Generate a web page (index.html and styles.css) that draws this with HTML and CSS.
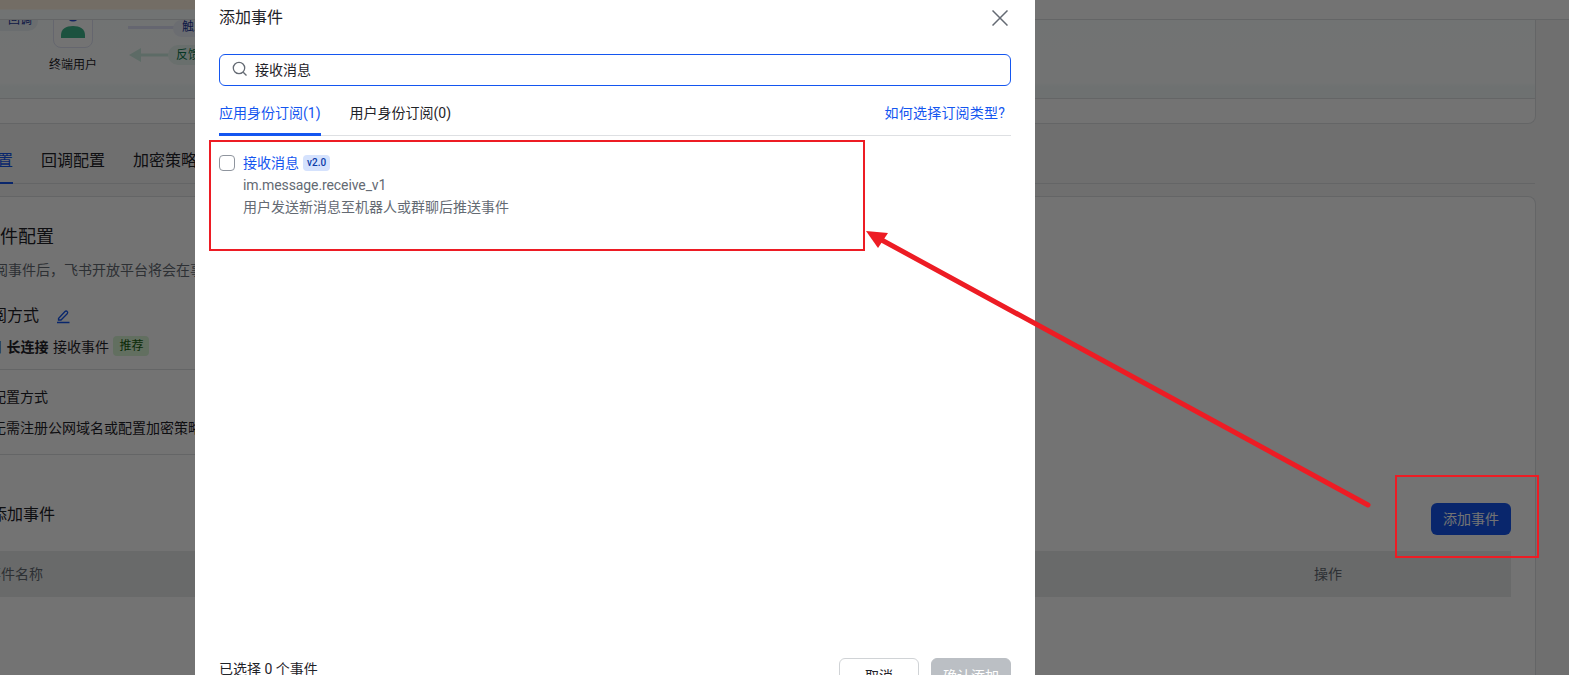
FILE: index.html
```html
<!DOCTYPE html>
<html>

<head>
    <link rel="stylesheet" href="styles.css">
    <title>添加事件</title>
</head>

<body>
    <div class="page">
        <div class="topbar"></div>

        <div class="card intro">
            <div class="hero">
                <div class="chip chip-callback">回调</div>
                <div class="user-box">
                    <svg width="38" height="40" viewBox="0 0 38 40">
                        <circle cx="19" cy="7" r="6.5" fill="#2f4fd0" />
                        <path d="M7 27c0-6 5-9 12-9s12 3 12 9v3H7z" fill="#3fb58c" />
                        <path d="M29 2c0 2-.5 3.500-1.500 5M33 1c0 2.500-.5 4.500-1.500 6" fill="none" stroke="#3fb58c" stroke-width="1.400" />
                    </svg>
                </div>
                <div class="user-name">终端用户</div>
                <div class="flow-line"></div>
                <div class="chip chip-trigger">触发</div>
                <svg class="back-arrow" width="40" height="16" viewBox="0 0 40 16">
                    <path d="M0 8L12 1v5.500h28v3H12V15z" fill="#cfeee2" />
                </svg>
                <div class="chip chip-back">反馈</div>
            </div>
        </div>

        <div class="tabs-bar">
            <span class="page-tab page-tab-active">事件配置</span>
            <span class="page-tab">回调配置</span>
            <span class="page-tab">加密策略</span>
        </div>

        <div class="card config">
            <h2 class="config-title">事件配置</h2>
            <p class="config-desc">订阅事件后，飞书开放平台将会在事件发生时推送事件</p>
            <div class="mode-title">订阅方式
                <svg class="edit-icon" width="16" height="16" viewBox="0 0 16 16">
                    <path d="M3.500 10.500L10 3.500a1.500 1.500 0 0 1 2.200 0a1.500 1.500 0 0 1 0 2.200L6 12H3.500zM2 14.500h12.500" fill="none" stroke="#1456f0" stroke-width="1.300" />
                </svg>
            </div>
            <div class="mode-row">使用&nbsp;<b>长连接</b>&nbsp;接收事件&nbsp;<span class="tag">推荐</span></div>
            <div class="divider divider-first"></div>
            <div class="sub-title">配置方式</div>
            <div class="sub-text">无需注册公网域名或配置加密策略</div>
            <div class="divider divider-second"></div>
            <div class="events-head">
                <span class="events-title">添加事件</span>
                <span class="btn-add">添加事件</span>
            </div>
            <div class="table-head">
                <span class="col-name">事件名称</span>
                <span class="col-action">操作</span>
            </div>
        </div>
    </div>

    <div class="mask"></div>

    <div class="modal">
        <div class="modal-head">
            <span>添加事件</span>
            <svg width="16" height="16" viewBox="0 0 16 16">
                <path d="M.5.500l15 15M15.500.500l-15 15" fill="none" stroke="#646a73" stroke-width="1.500" />
            </svg>
        </div>

        <div class="search">
            <svg width="16" height="16" viewBox="0 0 16 16">
                <circle cx="7" cy="7" r="5.700" fill="none" stroke="#646a73" stroke-width="1.300" />
                <path d="M11.200 11.200l3.300 3.300" fill="none" stroke="#646a73" stroke-width="1.300" />
            </svg>
            <span>接收消息</span>
        </div>

        <div class="modal-tabs">
            <span class="modal-tab modal-tab-active">应用身份订阅(1)</span>
            <span class="modal-tab">用户身份订阅(0)</span>
            <span class="help-link">如何选择订阅类型?</span>
        </div>

        <div class="event-item">
            <span class="checkbox"></span>
            <div>
                <div class="event-line"><span class="event-name">接收消息</span><span class="version">v2.0</span></div>
                <div class="event-key event-id">im.message.receive_v1</div>
                <div class="event-key">用户发送新消息至机器人或群聊后推送事件</div>
            </div>
        </div>

        <div class="modal-foot">
            <span class="selected">已选择 0 个事件</span>
            <div class="foot-btns">
                <span class="btn btn-cancel">取消</span>
                <span class="btn btn-confirm">确认添加</span>
            </div>
        </div>
    </div>

    <div class="mark mark-list"></div>
    <div class="mark mark-button"></div>
    <svg class="mark-arrow" width="1569" height="675" viewBox="0 0 1569 675">
        <path d="M1368 505L878 238" fill="none" stroke="#ed1c24" stroke-width="5" stroke-linecap="round" />
        <path d="M866 231L888 233L878 248z" fill="#ed1c24" />
    </svg>
</body>

</html>
```

FILE: styles.css
```css
html, body {
    margin: 0;
    height: 100%;
    overflow: hidden;
}

body {
    position: relative;
    background: #f5f6f7;
    color: #1f2329;
    font-family: Roboto, "Noto Sans CJK SC", sans-serif;
    font-size: 14px;
}

.page {
    margin-left: -40px;
    width: 1576px;
}

.topbar {
    width: 1609px;
    height: 19px;
    border-bottom: 1px solid #dee0e3;
    background: linear-gradient(#fff2e0 0, #fff2e0 9px, #fbfeff 10px) no-repeat;
    background-size: 30% 100%;
    background-color: #fff;
}

.card {
    box-sizing: border-box;
    background: #fff;
    border: 1px solid #dee0e3;
    border-radius: 8px;
}

.intro {
    height: 104px;
    border-top: none;
    border-radius: 0 0 8px 8px;
}

.hero {
    position: relative;
    height: 78px;
    border-bottom: 1px solid #dee0e3;
    background: linear-gradient(#fbffff, #fdffff 80%, #f3fafa 86%);
    overflow: hidden;
}

.chip {
    position: absolute;
    border-radius: 10px;
    font-size: 12px;
    line-height: 20px;
}

.chip-callback {
    left: 30px;
    top: -10px;
    width: 47px;
    height: 21px;
    padding-left: 17px;
    box-sizing: border-box;
    background: #ecf1f6;
    color: #1f3a9a;
}

.user-box {
    position: absolute;
    left: 92px;
    top: -14px;
    width: 38px;
    height: 39px;
    border: 1px solid #dfe3f4;
    border-radius: 8px;
    background: #fff;
    padding-top: 1px;
}

.user-name {
    position: absolute;
    left: 88px;
    top: 36px;
    font-size: 12px;
    line-height: 18px;
}

.flow-line {
    position: absolute;
    left: 167px;
    top: 6px;
    width: 50px;
    height: 3px;
    background: #dfe3f8;
}

.chip-trigger {
    left: 212px;
    top: 0;
    width: 60px;
    height: 17px;
    padding-left: 9px;
    box-sizing: border-box;
    line-height: 14px;
    background: #eef1fa;
    color: #1f3a9a;
}

.back-arrow {
    position: absolute;
    left: 168px;
    top: 27px;
}

.chip-back {
    left: 207px;
    top: 25px;
    width: 60px;
    height: 20px;
    padding-left: 8px;
    box-sizing: border-box;
    background: #e9f7f1;
    color: #0f7a52;
}

.tabs-bar {
    display: flex;
    gap: 28px;
    height: 60px;
    box-sizing: border-box;
    border-bottom: 1px solid #dee0e3;
    padding-top: 25px;
    width: 1575px;
}

.page-tab {
    font-size: 16px;
    line-height: 24px;
    height: 35px;
    box-sizing: border-box;
    flex-shrink: 0;
}

.page-tab-active {
    margin-left: -11px;
    color: #1456f0;
    border-bottom: 2px solid #1456f0;
}

.config {
    margin-top: 12px;
    height: 600px;
    border-bottom: none;
    padding: 0 24px 0 0;
    border-radius: 8px 8px 0 0;
}

.config-title {
    margin: 27px 0 0 21px;
    font-size: 18px;
    font-weight: 400;
    line-height: 26px;
}

.config-desc {
    margin: 9px 0 0 19px;
    font-size: 14px;
    line-height: 22px;
    color: #646a73;
}

.mode-title {
    margin: 23px 0 0 14px;
    font-size: 16px;
    line-height: 24px;
    display: flex;
    align-items: center;
}

.edit-icon {
    margin-left: 16px;
    margin-top: -1px;
}

.mode-row {
    margin: 8px 0 0 13px;
    height: 20px;
    display: flex;
    align-items: center;
    white-space: pre;
    word-spacing: 1px;
}

.tag {
    padding: 0 6px;
    border-radius: 4px;
    background: #d9f5d6;
    color: #186010;
    font-size: 12px;
    line-height: 20px;
}

.divider {
    height: 1px;
    width: 400px;
    background: #dee0e3;
}

.divider-first {
    margin-top: 13px;
}

.divider-second {
    margin-top: 15px;
}

.sub-title {
    margin: 16px 0 0 31px;
    line-height: 22px;
}

.sub-text {
    margin: 9px 0 0 31px;
    line-height: 22px;
}

.events-head {
    margin: 48px 0 0 30px;
    display: flex;
    justify-content: space-between;
    height: 32px;
}

.events-title {
    font-size: 16px;
    line-height: 24px;
}

.btn-add {
    background: #1456f0;
    color: #fff;
    border-radius: 6px;
    line-height: 32px;
    padding: 0 12px;
}

.table-head {
    margin-top: 16px;
    height: 46px;
    display: flex;
    align-items: center;
    background: #e9ecea;
    color: #646a73;
}

.col-name {
    margin-left: 26px;
    margin-top: -2px;
}

.col-action {
    margin-left: auto;
    margin-right: 169px;
    margin-top: -2px;
}

.mask {
    position: absolute;
    inset: 0;
    background: rgba(0, 0, 0, .55);
}

.modal {
    position: absolute;
    left: 195px;
    top: 0;
    width: 840px;
    height: 720px;
    box-sizing: border-box;
    padding: 0 24px;
    background: #fff;
    display: flex;
    flex-direction: column;
}

.modal-head {
    height: 54px;
    display: flex;
    justify-content: space-between;
    font-size: 16px;
    line-height: 36px;
    padding-right: 3px;
}

.modal-head svg {
    margin-top: 10px;
}

.search {
    height: 32px;
    box-sizing: border-box;
    border: 1px solid #1456f0;
    border-radius: 6px;
    display: flex;
    align-items: center;
    gap: 7px;
    padding: 0 0 2px 12px;
}

.modal-tabs {
    height: 50px;
    box-sizing: border-box;
    padding-top: 16px;
    border-bottom: 1px solid #dee0e3;
    display: flex;
    gap: 29px;
    line-height: 22px;
}

.modal-tab {
    height: 34px;
    box-sizing: border-box;
}

.modal-tab-active {
    color: #1456f0;
    border-bottom: 3px solid #1456f0;
    border-radius: 2px 2px 0 0;
}

.help-link {
    margin-left: auto;
    color: #1456f0;
    padding-right: 6px;
    letter-spacing: .2px;
}

.event-item {
    margin-top: 16px;
    display: flex;
    gap: 8px;
    line-height: 22px;
    flex: 1;
}

.checkbox {
    width: 16px;
    height: 16px;
    box-sizing: border-box;
    margin-top: 3px;
    border: 1px solid #8f959e;
    border-radius: 4px;
}

.event-line {
    display: flex;
    align-items: center;
    gap: 4px;
}

.event-name {
    color: #1456f0;
}

.version {
    font-size: 10px;
    font-weight: 500;
    line-height: 16px;
    padding: 0 4px;
    border-radius: 4px;
    background: #d5e2fd;
    color: #0c3ca8;
}

.event-key {
    color: #646a73;
}

.event-id {
    letter-spacing: -.1px;
}

.modal-foot {
    height: 62px;
    display: flex;
    justify-content: space-between;
    line-height: 22px;
}

.foot-btns {
    display: flex;
    gap: 12px;
}

.btn {
    width: 80px;
    height: 36px;
    box-sizing: border-box;
    border-radius: 6px;
    text-align: center;
    line-height: 34px;
}

.btn-cancel {
    border: 1px solid #d0d3d6;
}

.btn-confirm {
    border: 1px solid #bbbfc4;
    background: #bbbfc4;
    color: #fff;
}

.mark {
    position: absolute;
    box-sizing: border-box;
    border: 2px solid #ed1c24;
}

.mark-list {
    left: 209px;
    top: 140px;
    width: 656px;
    height: 111px;
}

.mark-button {
    left: 1395px;
    top: 475px;
    width: 144px;
    height: 83px;
}

.mark-arrow {
    position: absolute;
    left: 0;
    top: 0;
}
```
